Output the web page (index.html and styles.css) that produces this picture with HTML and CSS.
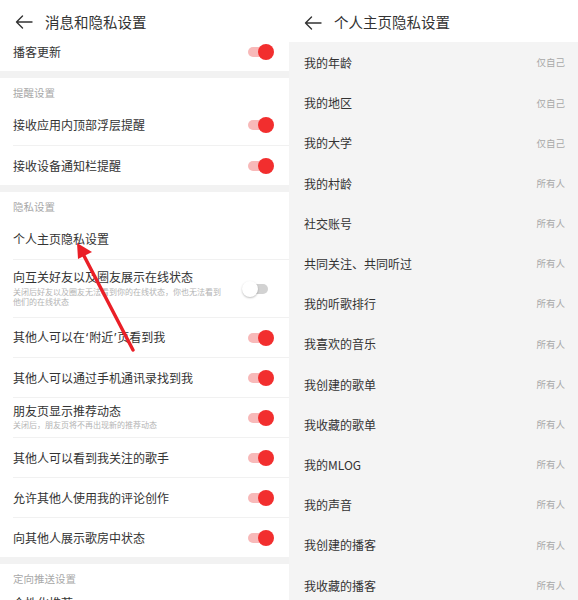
FILE: index.html
```html
<!DOCTYPE html>
<html lang="zh-CN">
<head>
<meta charset="utf-8">
<title>消息和隐私设置</title>
<link rel="stylesheet" href="styles.css">
</head>
<body>
<div class="screens">
  <section class="panel left">
    <header class="topbar">
      <svg class="back" width="18" height="14" viewBox="0 0 18 14"><path d="M17 7H1.5M7.5 1L1.5 7l6 6" fill="none" stroke="#333" stroke-width="1.4" stroke-linecap="round" stroke-linejoin="round"/></svg>
      <span class="title">消息和隐私设置</span>
    </header>

    <div class="group">
      <div class="row first-row"><span class="label">播客更新</span><span class="toggle on"><i></i></span></div>
    </div>

    <div class="group">
      <div class="group-title">提醒设置</div>
      <div class="row"><span class="label">接收应用内顶部浮层提醒</span><span class="toggle on"><i></i></span></div>
      <div class="row"><span class="label">接收设备通知栏提醒</span><span class="toggle on"><i></i></span></div>
    </div>

    <div class="group">
      <div class="group-title">隐私设置</div>
      <div class="row"><span class="label">个人主页隐私设置</span></div>
      <div class="row tall">
        <div class="text">
          <span class="label">向互关好友以及圈友展示在线状态</span>
          <span class="sub wrap">关闭后好友以及圈友无法看到你的在线状态，你也无法看到他们的在线状态</span>
        </div>
        <span class="toggle off"><i></i></span>
      </div>
      <div class="row"><span class="label">其他人可以在<span class="q">‘</span>附近<span class="q">’</span>页看到我</span><span class="toggle on"><i></i></span></div>
      <div class="row"><span class="label">其他人可以通过手机通讯录找到我</span><span class="toggle on"><i></i></span></div>
      <div class="row">
        <div class="text">
          <span class="label">朋友页显示推荐动态</span>
          <span class="sub">关闭后，朋友页将不再出现新的推荐动态</span>
        </div>
        <span class="toggle on"><i></i></span>
      </div>
      <div class="row"><span class="label">其他人可以看到我关注的歌手</span><span class="toggle on"><i></i></span></div>
      <div class="row"><span class="label">允许其他人使用我的评论创作</span><span class="toggle on"><i></i></span></div>
      <div class="row"><span class="label">向其他人展示歌房中状态</span><span class="toggle on"><i></i></span></div>
    </div>

    <div class="group">
      <div class="group-title">定向推送设置</div>
      <div class="row last-row"><span class="label">个性化推荐</span></div>
    </div>

    <svg class="pointer" width="289" height="600" viewBox="0 0 289 600">
      <line x1="133" y1="350" x2="82" y2="252" stroke="#ea1f27" stroke-width="3.4" stroke-linecap="round"/>
      <polygon points="77,243 92,252 78,259" fill="#ea1f27"/>
    </svg>
  </section>

  <section class="panel right">
    <header class="topbar topbar-r">
      <svg class="back" width="18" height="14" viewBox="0 0 18 14"><path d="M17 7H1.5M7.5 1L1.5 7l6 6" fill="none" stroke="#333" stroke-width="1.4" stroke-linecap="round" stroke-linejoin="round"/></svg>
      <span class="title">个人主页隐私设置</span>
    </header>
    <ul class="plist">
      <li><span>我的年龄</span><em>仅自己</em></li>
      <li><span>我的地区</span><em>仅自己</em></li>
      <li><span>我的大学</span><em>仅自己</em></li>
      <li><span>我的村龄</span><em>所有人</em></li>
      <li><span>社交账号</span><em>所有人</em></li>
      <li><span>共同关注、共同听过</span><em>所有人</em></li>
      <li><span>我的听歌排行</span><em>所有人</em></li>
      <li><span>我喜欢的音乐</span><em>所有人</em></li>
      <li><span>我创建的歌单</span><em>所有人</em></li>
      <li><span>我收藏的歌单</span><em>所有人</em></li>
      <li><span>我的MLOG</span><em>所有人</em></li>
      <li><span>我的声音</span><em>所有人</em></li>
      <li><span>我创建的播客</span><em>所有人</em></li>
      <li><span>我收藏的播客</span><em>所有人</em></li>
    </ul>
  </section>
</div>
</body>
</html>
```
FILE: styles.css
```css
* { box-sizing: border-box; }
html, body { margin: 0; padding: 0; }
body {
  width: 578px;
  height: 600px;
  overflow: hidden;
  background: #fff;
  font-family: "Noto Sans CJK SC", "Noto Sans", sans-serif;
  color: #333;
}
.screens {
  display: flex;
  width: 578px;
  height: 600px;
}
.panel {
  width: 289px;
  height: 600px;
  overflow: hidden;
  position: relative;
  flex: none;
}
.left { background: #f2f2f2; }
.right { background: #f4f4f4; }

.topbar {
  height: 40px;
  background: #fff;
  display: flex;
  align-items: center;
  padding: 4px 0 0 15px;
}
.topbar-r { height: 42px; padding: 3px 0 0 15px; }
.back { flex: none; }
.title {
  font-size: 14.5px;
  line-height: 1;
  margin-left: 12px;
  color: #333;
}

.group {
  background: #fff;
  margin-bottom: 7px;
}
.group-title {
  height: 27px;
  padding: 4px 13px 0;
  display: flex;
  align-items: center;
  font-size: 10.5px;
  line-height: 1;
  color: #a8a8a8;
}
.row {
  height: 40px;
  margin-left: 13px;
  padding-right: 21px;
  display: flex;
  align-items: center;
  justify-content: space-between;
  border-top: 1px solid #f1f1f1;
}
.group-title + .row { border-top: none; }
.first-row {
  height: 31px;
  padding-bottom: 8px;
  border-top: none;
}
.last-row {
  align-items: flex-start;
  padding-top: 6px;
}
.row.tall { height: 58px; }
.label {
  font-size: 12px;
  line-height: 1;
  color: #333;
  white-space: nowrap;
}
.q {
  font-family: "Noto Sans", "DejaVu Sans", sans-serif;
  margin: 0 1px;
}
.text {
  display: flex;
  flex-direction: column;
}
.sub {
  font-size: 8px;
  line-height: 10px;
  color: #b4b4b4;
  margin-top: 3px;
}
.sub.wrap { width: 214px; }
.row.tall .sub { margin-top: 4px; }

.toggle {
  width: 20px;
  height: 10px;
  border-radius: 5px;
  position: relative;
  flex: none;
}
.toggle i {
  position: absolute;
  top: -3px;
  width: 16px;
  height: 16px;
  border-radius: 50%;
}
.toggle.on { background: #f8b9b9; }
.toggle.on i { left: 10px; background: #f22e2e; }
.toggle.off { background: #d2d2d2; }
.toggle.off i {
  left: -6px;
  background: #fff;
  box-shadow: 0 1px 2px rgba(0,0,0,0.25);
}

.pointer {
  position: absolute;
  left: 0;
  top: 0;
  pointer-events: none;
}

.plist {
  list-style: none;
  margin: 0;
  padding: 1px 0 0;
}
.plist li {
  height: 40.2px;
  display: flex;
  align-items: center;
  justify-content: space-between;
  padding: 0 13px 0 15px;
}
.plist span {
  font-size: 12px;
  line-height: 1;
  color: #333;
}
.plist em {
  font-style: normal;
  font-size: 9.5px;
  line-height: 1;
  color: #a8a8a8;
}
```
